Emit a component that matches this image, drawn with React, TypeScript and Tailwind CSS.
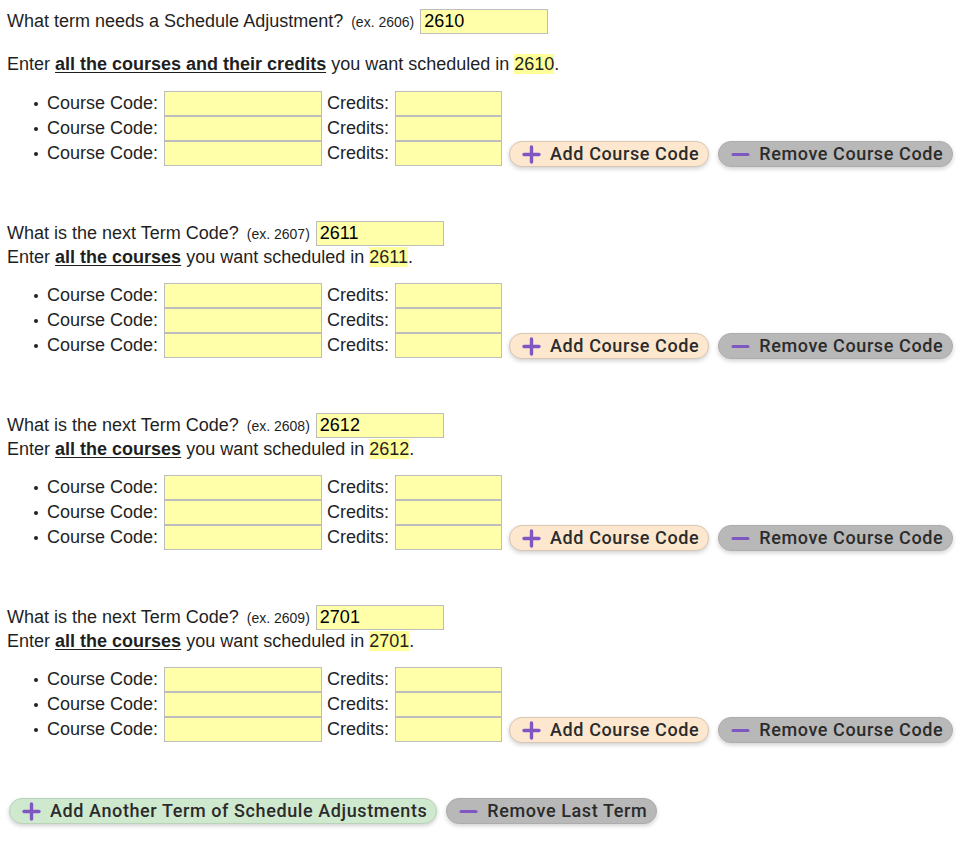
import React from "react";

type Term = { code: string; example: string };

const TERMS: Term[] = [
  { code: "2610", example: "2606" },
  { code: "2611", example: "2607" },
  { code: "2612", example: "2608" },
  { code: "2701", example: "2609" },
];

const PlusIcon = () => (
  <svg width="19" height="19" viewBox="0 0 19 19" className="shrink-0">
    <path d="M9.5 2v15M2 9.5h15" stroke="#7e57c2" strokeWidth="3.4" strokeLinecap="round" />
  </svg>
);

const MinusIcon = () => (
  <svg width="19" height="19" viewBox="0 0 19 19" className="shrink-0">
    <path d="M2 9.5h15" stroke="#7e57c2" strokeWidth="3" strokeLinecap="round" />
  </svg>
);

const PillButton: React.FC<{ kind: "add" | "remove" | "addTerm"; label: string }> = ({ kind, label }) => {
  const tone =
    kind === "add"
      ? "bg-[#fde7cf] border-[#d9c7b3]"
      : kind === "addTerm"
        ? "bg-[#cfe9cf] border-[#b9d2b9]"
        : "bg-[#b8b8b8] border-[#acacac]";
  return (
    <button
      className={`h-[26px] rounded-full border ${tone} flex items-center gap-[9px] pl-[12px] pr-[9px] text-[18px] font-medium tracking-[0.6px] text-[#2b2b2b] shadow-[0_2px_4px_rgba(0,0,0,0.18)] [font-family:Roboto,sans-serif]`}
    >
      {kind === "remove" ? <MinusIcon /> : <PlusIcon />}
      <span className="leading-none">{label}</span>
    </button>
  );
};

const Field: React.FC<{ w: string; value?: string }> = ({ w, value }) => (
  <input
    readOnly
    value={value ?? ""}
    className={`${w} h-[25px] border border-[#bdbdbd] bg-[#ffffaa] px-[3px] text-[18px] text-black outline-none`}
  />
);

const CourseRow: React.FC<{ last: boolean }> = ({ last }) => (
  <li className="flex items-center h-[25px] relative">
    <span className="absolute left-[-13px] top-[11px] w-[4px] h-[4px] rounded-full bg-[#222]" />
    <span className="mr-[6px]">Course Code:</span>
    <Field w="w-[158px]" />
    <span className="ml-[5px] mr-[6px]">Credits:</span>
    <Field w="w-[107px]" />
    {last && (
      <div className="flex items-center gap-[9px] ml-[7px] mt-[1px]">
        <PillButton kind="add" label="Add Course Code" />
        <PillButton kind="remove" label="Remove Course Code" />
      </div>
    )}
  </li>
);

const TermBlock: React.FC<{ term: Term; first: boolean }> = ({ term, first }) => (
  <section className={first ? "" : "mt-[54px]"}>
    <div className="flex items-center h-[26px]">
      <span>{first ? "What term needs a Schedule Adjustment?" : "What is the next Term Code?"}</span>
      <span className="text-[14px] ml-[8px] mt-[3px]">(ex. {term.example})</span>
      <span className="ml-[6px]">
        <Field w="w-[128px]" value={term.code} />
      </span>
    </div>
    <div className={`flex items-center ${first ? "mt-[18px] h-[24px]" : "h-[22px]"}`}>
      <span>
        Enter{" "}
        <b className="underline underline-offset-[2px]">
          {first ? "all the courses and their credits" : "all the courses"}
        </b>{" "}
        you want scheduled in <span className="bg-[#ffff99]">{term.code}</span>.
      </span>
    </div>
    <ul className={`pl-[40px] ${first ? "mt-[15px]" : "mt-[15px]"}`}>
      {[0, 1, 2].map((i) => (
        <CourseRow key={i} last={i === 2} />
      ))}
    </ul>
  </section>
);

export default function App() {
  return (
    <div className="px-[7px] pt-[8px] pb-[20px] text-[18px] text-[#1f1f1f] [font-family:'Liberation_Sans',Arial,sans-serif] bg-white min-h-[860px]">
      {TERMS.map((t, i) => (
        <TermBlock key={t.code} term={t} first={i === 0} />
      ))}
      <div className="flex items-center gap-[9px] mt-[56px] ml-[2px]">
        <PillButton kind="addTerm" label="Add Another Term of Schedule Adjustments" />
        <PillButton kind="remove" label="Remove Last Term" />
      </div>
    </div>
  );
}
